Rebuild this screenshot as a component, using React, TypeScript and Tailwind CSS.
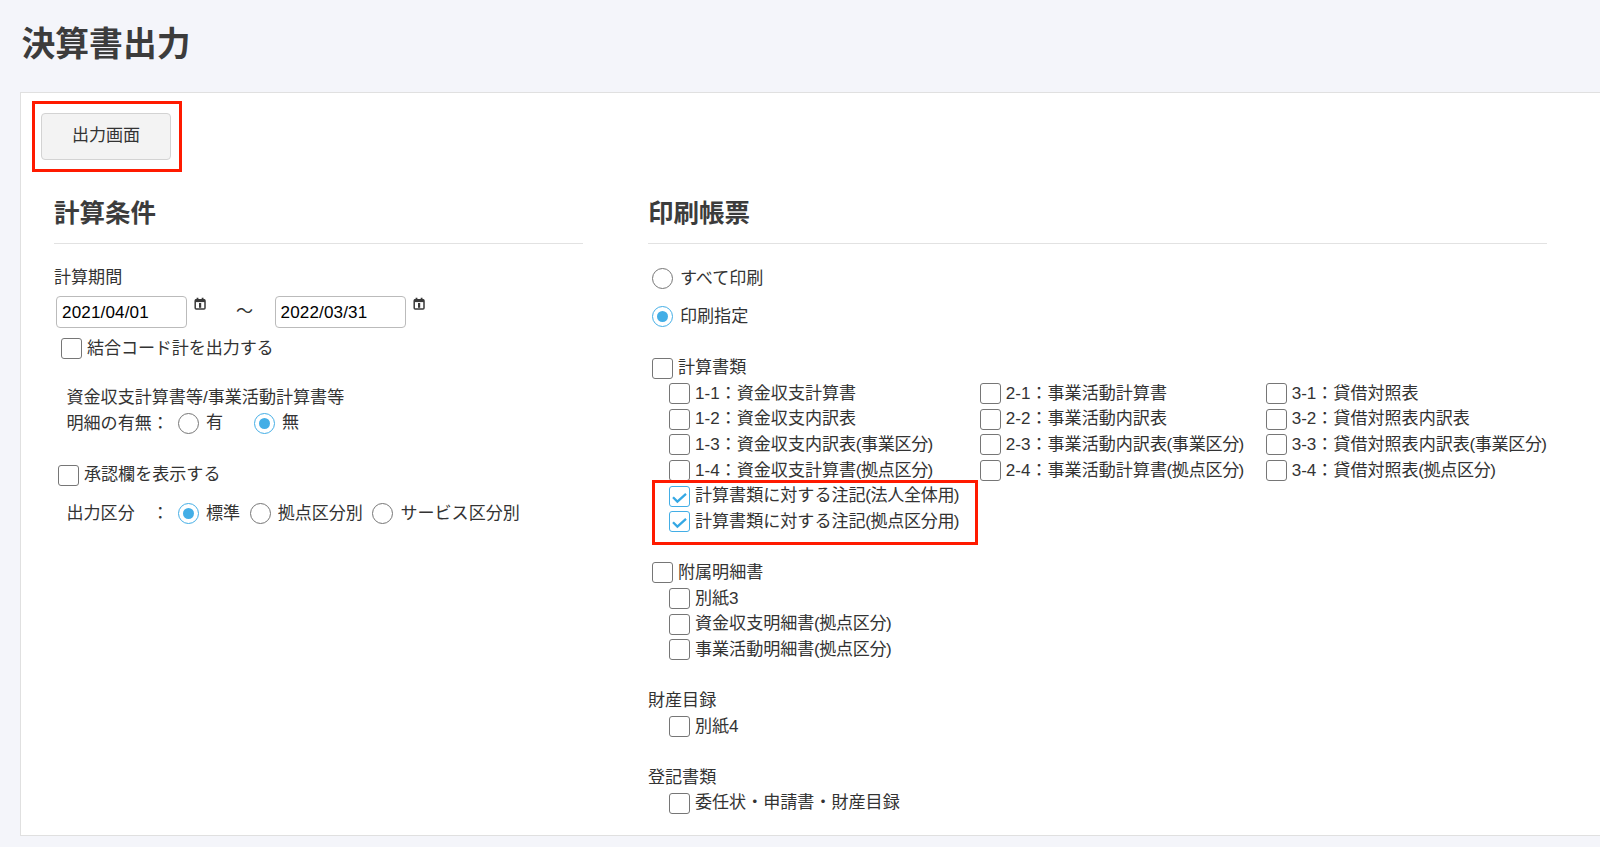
import { type ReactNode } from "react";

function LabelText({ text }: { text: string }) {
  const open = text.indexOf("(");
  if (open < 0) {
    return <span className="pt-[3px]">{text}</span>;
  }
  return (
    <span className="pt-[3px]">
      {text.slice(0, open)}
      <span className="-ml-[0.5px] tracking-[-0.3px]">{text.slice(open, -1)}</span>
      <span className="-ml-[0.5px]">)</span>
    </span>
  );
}

function Check({ checked = false, text }: { checked?: boolean; text: string }) {
  return (
    <label className="flex h-[25.6px] items-center whitespace-nowrap">
      <span
        className={
          "mt-[3px] mr-[5px] flex size-[21px] shrink-0 items-center justify-center rounded-[3px] border bg-white " +
          (checked ? "border-[#43aee6]" : "border-[#767676]")
        }
      >
        {checked && (
          <svg viewBox="0 0 19 19" className="size-[19px]" fill="none" stroke="#35a8e4" strokeWidth="2.3">
            <path d="M3 10.2l4.4 4.4L16 6.8" />
          </svg>
        )}
      </span>
      <LabelText text={text} />
    </label>
  );
}

function Radio({ checked = false, text }: { checked?: boolean; text: string }) {
  return (
    <label className="flex h-[25.6px] items-center whitespace-nowrap">
      <span
        className={
          "mt-[3px] mr-[7px] flex size-[21px] shrink-0 items-center justify-center rounded-full border bg-white " +
          (checked ? "border-[#43aee6]" : "border-[#767676]")
        }
      >
        {checked && <span className="size-[11px] rounded-full bg-[#43aee6]" />}
      </span>
      <LabelText text={text} />
    </label>
  );
}

function CalendarIcon() {
  return (
    <svg viewBox="0 0 12 13" className="mt-px ml-[7px] h-[13px] w-3 shrink-0" fill="none" stroke="#3a3a3a">
      <rect x="1.2" y="2.8" width="9.8" height="9.2" rx="1" strokeWidth="1.5" />
      <path d="M1 3.8h10" strokeWidth="2.6" />
      <path d="M3.5 0.8v3M8.6 0.8v3" strokeWidth="1.8" />
      <path d="M6.1 6v4.8" strokeWidth="2.2" />
    </svg>
  );
}

function DateField({ value }: { value: string }) {
  return (
    <div className="flex items-start">
      <input
        type="text"
        defaultValue={value}
        className="h-8 w-[131px] rounded-[4px] border border-[#bbbbbb] bg-white px-[5px] pt-[2px] text-[17.07px] tracking-[0.15px] text-black"
      />
      <CalendarIcon />
    </div>
  );
}

function SectionTitle({ children }: { children: ReactNode }) {
  return (
    <h2 className="mt-[22px] h-[50px] border-b border-[#e2e2e2] text-[25.5px] leading-[38.4px] font-bold text-[#3c3c3c]">
      {children}
    </h2>
  );
}

const statements = [
  ["1-1：資金収支計算書", "1-2：資金収支内訳表", "1-3：資金収支内訳表(事業区分)", "1-4：資金収支計算書(拠点区分)"],
  ["2-1：事業活動計算書", "2-2：事業活動内訳表", "2-3：事業活動内訳表(事業区分)", "2-4：事業活動計算書(拠点区分)"],
  ["3-1：貸借対照表", "3-2：貸借対照表内訳表", "3-3：貸借対照表内訳表(事業区分)", "3-4：貸借対照表(拠点区分)"],
];

export default function App() {
  return (
    <div className="h-[847px] w-full overflow-hidden bg-[#f4f5fa] font-['Liberation_Sans','Noto_Sans_CJK_JP',sans-serif] text-[17.07px] leading-[25.6px] text-[#333333]">
      <header className="h-[92px] pt-[19px] pl-[21.5px]">
        <h1 className="text-[33.8px] leading-[51px] font-bold text-[#3c3c3c]">決算書出力</h1>
      </header>

      <main className="ml-5 h-[744px] border-y border-l border-[#e0e0e0] bg-white">
        <div className="mt-[8px] ml-[11px] flex h-[71px] w-[150px] items-center border-3 border-[#ff1a00] pl-[6px]">
          <button className="-mt-px h-[47px] w-[130px] rounded-[4px] border border-[#d3d3d3] bg-[#f3f3f3]">
            出力画面
          </button>
        </div>

        <div className="flex gap-[65px] pl-[33px]">
          <section className="w-[529px] shrink-0">
            <SectionTitle>計算条件</SectionTitle>
            <div className="mt-[21px]">計算期間</div>
            <div className="mt-[5px] ml-[2px] flex h-8 items-start">
              <DateField value="2021/04/01" />
              <span className="mr-[21.5px] ml-[30px] w-[17px] pt-[3px]">～</span>
              <DateField value="2022/03/31" />
            </div>
            <div className="mt-[7px] ml-[7px] tracking-[-0.1px]">
              <Check text="結合コード計を出力する" />
            </div>
            <div className="mt-[25px] ml-[12.5px]">資金収支計算書等/事業活動計算書等</div>
            <div className="-mt-[2px] ml-[12.5px] flex">
              <span className="w-[111.5px] pt-[2px]">明細の有無：</span>
              <div className="w-[76px]">
                <Radio text="有" />
              </div>
              <Radio checked text="無" />
            </div>
            <div className="mt-[24.5px] ml-[4px]">
              <Check text="承認欄を表示する" />
            </div>
            <div className="mt-[13px] ml-[12.5px] flex">
              <span className="w-[111.5px] pt-[2px]">出力区分　：</span>
              <div className="flex gap-[9.5px]">
                <Radio checked text="標準" />
                <Radio text="拠点区分別" />
                <Radio text="サービス区分別" />
              </div>
            </div>
          </section>

          <section className="w-[899px] shrink-0">
            <SectionTitle>印刷帳票</SectionTitle>
            <div className="mt-[20px] ml-[4px] flex flex-col gap-[13px]">
              <Radio text="すべて印刷" />
              <Radio checked text="印刷指定" />
            </div>

            <div className="mt-[25.6px] ml-[4px]">
              <Check text="計算書類" />
            </div>
            <div className="ml-[21px] flex">
              <div className="w-[311px]">
                {statements[0].map((t) => <Check key={t} text={t} />)}
              </div>
              <div className="w-[286px]">
                {statements[1].map((t) => <Check key={t} text={t} />)}
              </div>
              <div>
                {statements[2].map((t) => <Check key={t} text={t} />)}
              </div>
            </div>
            <div className="relative ml-[21px]">
              <Check checked text="計算書類に対する注記(法人全体用)" />
              <Check checked text="計算書類に対する注記(拠点区分用)" />
              <div className="pointer-events-none absolute -top-[2px] -left-[17px] h-[65px] w-[326px] border-3 border-[#ff1a00]" />
            </div>

            <div className="mt-[25.6px] ml-[4px]">
              <Check text="附属明細書" />
            </div>
            <div className="ml-[21px]">
              <Check text="別紙3" />
              <Check text="資金収支明細書(拠点区分)" />
              <Check text="事業活動明細書(拠点区分)" />
            </div>

            <div className="mt-[25.6px] h-[25.6px] pt-[1.5px]">財産目録</div>
            <div className="ml-[21px]">
              <Check text="別紙4" />
            </div>

            <div className="mt-[25.6px] h-[25.6px] pt-[1.5px]">登記書類</div>
            <div className="ml-[21px]">
              <Check text="委任状・申請書・財産目録" />
            </div>
          </section>
        </div>
      </main>
    </div>
  );
}
